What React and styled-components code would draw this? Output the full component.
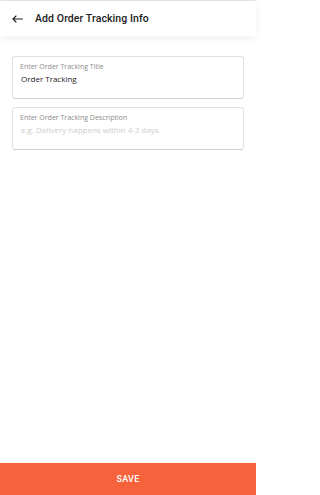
import React from 'react';
import styled, { createGlobalStyle } from 'styled-components';

const GlobalStyle = createGlobalStyle`
  html, body {
    margin: 0;
    padding: 0;
    background: #fff;
    font-family: Roboto, "Noto Sans", Arial, sans-serif;
  }
`;

export default function App() {
  return (
    <Page>
      <GlobalStyle />
      <Header>
        <BackButton aria-label="back">
          <svg width="11" height="8" viewBox="0 0 11 8" fill="none">
            <path d="M10.5 4H1.2M4 1L1 4l3 3" stroke="#222" strokeWidth="1.1" strokeLinecap="round" strokeLinejoin="round" />
          </svg>
        </BackButton>
        <Title>Add Order Tracking Info</Title>
      </Header>

      <Form>
        <Field>
          <Label>Enter Order Tracking Title</Label>
          <Input defaultValue="Order Tracking" />
        </Field>
        <Field>
          <Label>Enter Order Tracking Description</Label>
          <Input placeholder="e.g. Delivery happens within 4-3 days." />
        </Field>
      </Form>

      <SaveButton>SAVE</SaveButton>
    </Page>
  );
}

const Page = styled.div`
  width: 256px;
  height: 495px;
  display: flex;
  flex-direction: column;
  border-top: 1px solid #e6e6e6;
  box-sizing: border-box;
`;

const Header = styled.div`
  height: 35px;
  display: flex;
  align-items: center;
  padding: 0 12px;
  background: #fff;
  box-shadow: 0 3px 8px rgba(0, 0, 0, 0.06);
  position: relative;
  z-index: 1;
`;

const BackButton = styled.button`
  border: none;
  background: none;
  padding: 0;
  width: 11px;
  height: 8px;
  display: flex;
  margin-right: 12px;
  cursor: pointer;
`;

const Title = styled.h1`
  margin: 0;
  font-size: 10.5px;
  font-weight: 500;
  color: #222;
  letter-spacing: 0.1px;
`;

const Form = styled.div`
  flex: 1;
  display: flex;
  flex-direction: column;
  gap: 8px;
  padding: 20px 12px 0;
`;

const Field = styled.div`
  height: 43px;
  box-sizing: border-box;
  border: 1px solid #e2e2e2;
  border-bottom-color: #cfcfcf;
  border-radius: 3px;
  padding: 5px 7px;
  display: flex;
  flex-direction: column;
`;

const Label = styled.label`
  font-family: "Open Sans", Roboto, sans-serif;
  font-size: 7px;
  color: #8a8a8a;
  line-height: 9px;
`;

const Input = styled.input`
  border: none;
  outline: none;
  padding: 0 0 0 1px;
  margin-top: 2px;
  font-family: "Open Sans", Roboto, sans-serif;
  font-size: 8px;
  font-weight: 400;
  color: #222;
  background: transparent;

  &::placeholder {
    color: #cdcdcd;
  }
`;

const SaveButton = styled.button`
  height: 32px;
  border: none;
  background: #f5623c;
  color: #fff;
  font-family: inherit;
  font-size: 9px;
  font-weight: 500;
  letter-spacing: 0.3px;
  cursor: pointer;
`;
